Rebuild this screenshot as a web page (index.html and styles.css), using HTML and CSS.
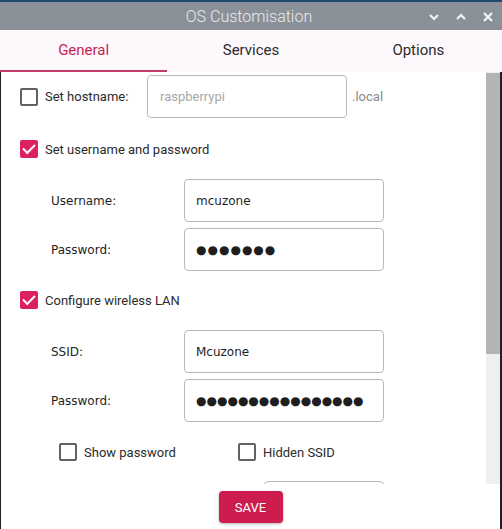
FILE: index.html
```html
<!DOCTYPE html>
<html lang="en">
<head>
    <meta charset="UTF-8">
    <meta name="viewport" content="width=device-width, initial-scale=1.0">
    <title>OS Customisation</title>
    <link rel="stylesheet" href="styles.css">
</head>
<body>

    <div class="ventana">
        <div class="titulo">
            <span class="titulo-texto">OS Customisation</span>
            <div class="titulo-botones">
                <svg width="12" height="12" viewBox="0 0 12 12"><path d="M2 4 L6 8 L10 4" fill="none" stroke="#f2f3f4" stroke-width="2.2"/></svg>
                <svg width="12" height="12" viewBox="0 0 12 12"><path d="M2 8 L6 4 L10 8" fill="none" stroke="#f2f3f4" stroke-width="2.2"/></svg>
                <svg width="12" height="12" viewBox="0 0 12 12"><path d="M2 2 L10 10 M10 2 L2 10" fill="none" stroke="#f2f3f4" stroke-width="2.4"/></svg>
            </div>
        </div>

        <div class="pestanas">
            <div class="pestana activa">General</div>
            <div class="pestana">Services</div>
            <div class="pestana">Options</div>
        </div>

        <div class="cuerpo">
            <div class="contenido">
                <div class="fila fila-host">
                    <span class="casilla"></span>
                    <span class="etiqueta-check">Set hostname:</span>
                    <input class="campo campo-host" type="text" placeholder="raspberrypi">
                    <span class="sufijo">.local</span>
                </div>

                <div class="fila fila-check">
                    <span class="casilla marcada"></span>
                    <span class="etiqueta-check">Set username and password</span>
                </div>

                <div class="fila fila-campo">
                    <span class="etiqueta">Username:</span>
                    <input class="campo" type="text" value="mcuzone">
                </div>
                <div class="fila fila-campo cerca">
                    <span class="etiqueta">Password:</span>
                    <input class="campo puntos corto" type="text" value="●●●●●●●">
                </div>

                <div class="fila fila-check wifi">
                    <span class="casilla marcada"></span>
                    <span class="etiqueta-check">Configure wireless LAN</span>
                </div>

                <div class="fila fila-campo">
                    <span class="etiqueta">SSID:</span>
                    <input class="campo" type="text" value="Mcuzone">
                </div>
                <div class="fila fila-campo cerca">
                    <span class="etiqueta">Password:</span>
                    <input class="campo puntos" type="text" value="●●●●●●●●●●●●●●●●">
                </div>

                <div class="fila fila-opciones">
                    <div class="opcion">
                        <span class="casilla"></span>
                        <span class="etiqueta-check">Show password</span>
                    </div>
                    <div class="opcion">
                        <span class="casilla"></span>
                        <span class="etiqueta-check">Hidden SSID</span>
                    </div>
                </div>

                <div class="fila fila-pais">
                    <input class="campo campo-pais" type="text">
                </div>
            </div>
            <div class="barra">
                <div class="barra-pulgar"></div>
            </div>
        </div>

        <div class="pie">
            <button class="boton-guardar">SAVE</button>
        </div>
    </div>

</body>
</html>
```

FILE: styles.css
```css
body {
    margin: 0;
    width: 502px;
    height: 529px;
    overflow: hidden;
    background-color: #2a1c24;
    font-family: Roboto, "Liberation Sans", sans-serif;
}
.ventana {
    display: flex;
    flex-direction: column;
    height: 529px;
}
.titulo {
    position: relative;
    height: 28px;
    border-top: 2px solid #1f4a6c;
    background-color: #8a9198;
    display: flex;
    align-items: center;
    justify-content: center;
}
.titulo-texto {
    color: #e9ebed;
    font-size: 16px;
    font-weight: 300;
    margin-right: 4px;
}
.titulo-botones {
    position: absolute; /* botones de la ventana */
    right: 8px;
    top: 9px;
    display: flex;
    gap: 15px;
}
.pestanas {
    display: flex;
    height: 42px;
    background-color: #fdf8fb;
}
.pestana {
    flex: 1;
    display: flex;
    align-items: center;
    justify-content: center;
    font-size: 15px;
    color: #2c2c2c;
    border-bottom: 2px solid transparent;
    box-sizing: border-box;
}
.pestana.activa {
    color: #c8255a;
    border-bottom-color: #c13a64;
}
.cuerpo {
    display: flex;
    height: 412px;
    overflow: hidden;
    background-color: #fff;
    margin-left: 1px;
    margin-right: 2px;
}
.contenido {
    flex: 1;
    padding-left: 19px;
}
.barra {
    width: 14px;
    background-color: #eef0ee;
}
.barra-pulgar {
    height: 281px;
    margin-top: 1px;
    background-color: #b4b4b4;
}
.fila {
    display: flex;
    align-items: center;
}
.fila-host {
    height: 43px;
    margin-top: 3px;
}
.fila-check {
    height: 24px;
    margin-top: 19px;
}
.fila-check.wifi {
    margin-top: 17px;
}
.fila-campo {
    height: 43px;
    margin-top: 18px;
    padding-left: 31px;
}
.fila-campo.cerca {
    margin-top: 6px;
}
.fila-opciones {
    height: 24px;
    margin-top: 18px;
    padding-left: 39px;
}
.fila-pais {
    height: 43px;
    margin-top: 17px;
    padding-left: 244px;
}
.opcion {
    display: flex;
    align-items: center;
    width: 179px;
}
.casilla {
    width: 18px;
    height: 18px;
    box-sizing: border-box;
    border: 2px solid #626262;
    border-radius: 2px;
    position: relative;
}
.casilla.marcada {
    border: none;
    background-color: #dd2160;
}
.casilla.marcada::after {
    content: "";
    position: absolute;
    left: 3px;
    top: 4px;
    width: 10px;
    height: 5px;
    border-left: 2px solid #fff;
    border-bottom: 2px solid #fff;
    transform: rotate(-45deg);
}
.etiqueta-check {
    margin-left: 7px;
    font-size: 13px;
    color: #2b2b2b;
}
.fila-host .etiqueta-check {
    width: 102px;
}
.etiqueta {
    width: 133px;
    font-family: "DejaVu Sans", sans-serif;
    font-size: 12px;
    color: #1e1e1e;
}
.campo {
    width: 200px;
    height: 43px;
    box-sizing: border-box;
    border: 1px solid #b9b9b9;
    border-radius: 4px;
    padding: 0 11px;
    font-family: "DejaVu Sans", sans-serif;
    font-size: 12px;
    color: #1e1e1e;
    background-color: #fff;
    outline: none;
}
.campo::placeholder {
    font-family: Roboto, sans-serif;
    font-size: 13px;
    color: #a8a8a8;
}
.campo-host {
    padding-left: 12px;
}
.campo-pais {
    width: 120px;
}
.puntos {
    font-size: 12px;
    letter-spacing: 0;
}
.puntos.corto {
    letter-spacing: 1px;
}
.sufijo {
    margin-left: 5px;
    font-size: 13px;
    color: #8a8a8a;
}
.pie {
    flex: 1;
    display: flex;
    justify-content: center;
    padding-top: 7px;
    background-color: #fff;
    margin-left: 1px;
    margin-right: 2px;
}
.boton-guardar {
    width: 64px;
    height: 32px;
    border: none;
    border-radius: 4px;
    background-color: #cd1d4e;
    color: #fff;
    font-family: Roboto, sans-serif;
    font-size: 13px;
    box-shadow: 0 1px 3px rgba(0, 0, 0, 0.3);
}
```
